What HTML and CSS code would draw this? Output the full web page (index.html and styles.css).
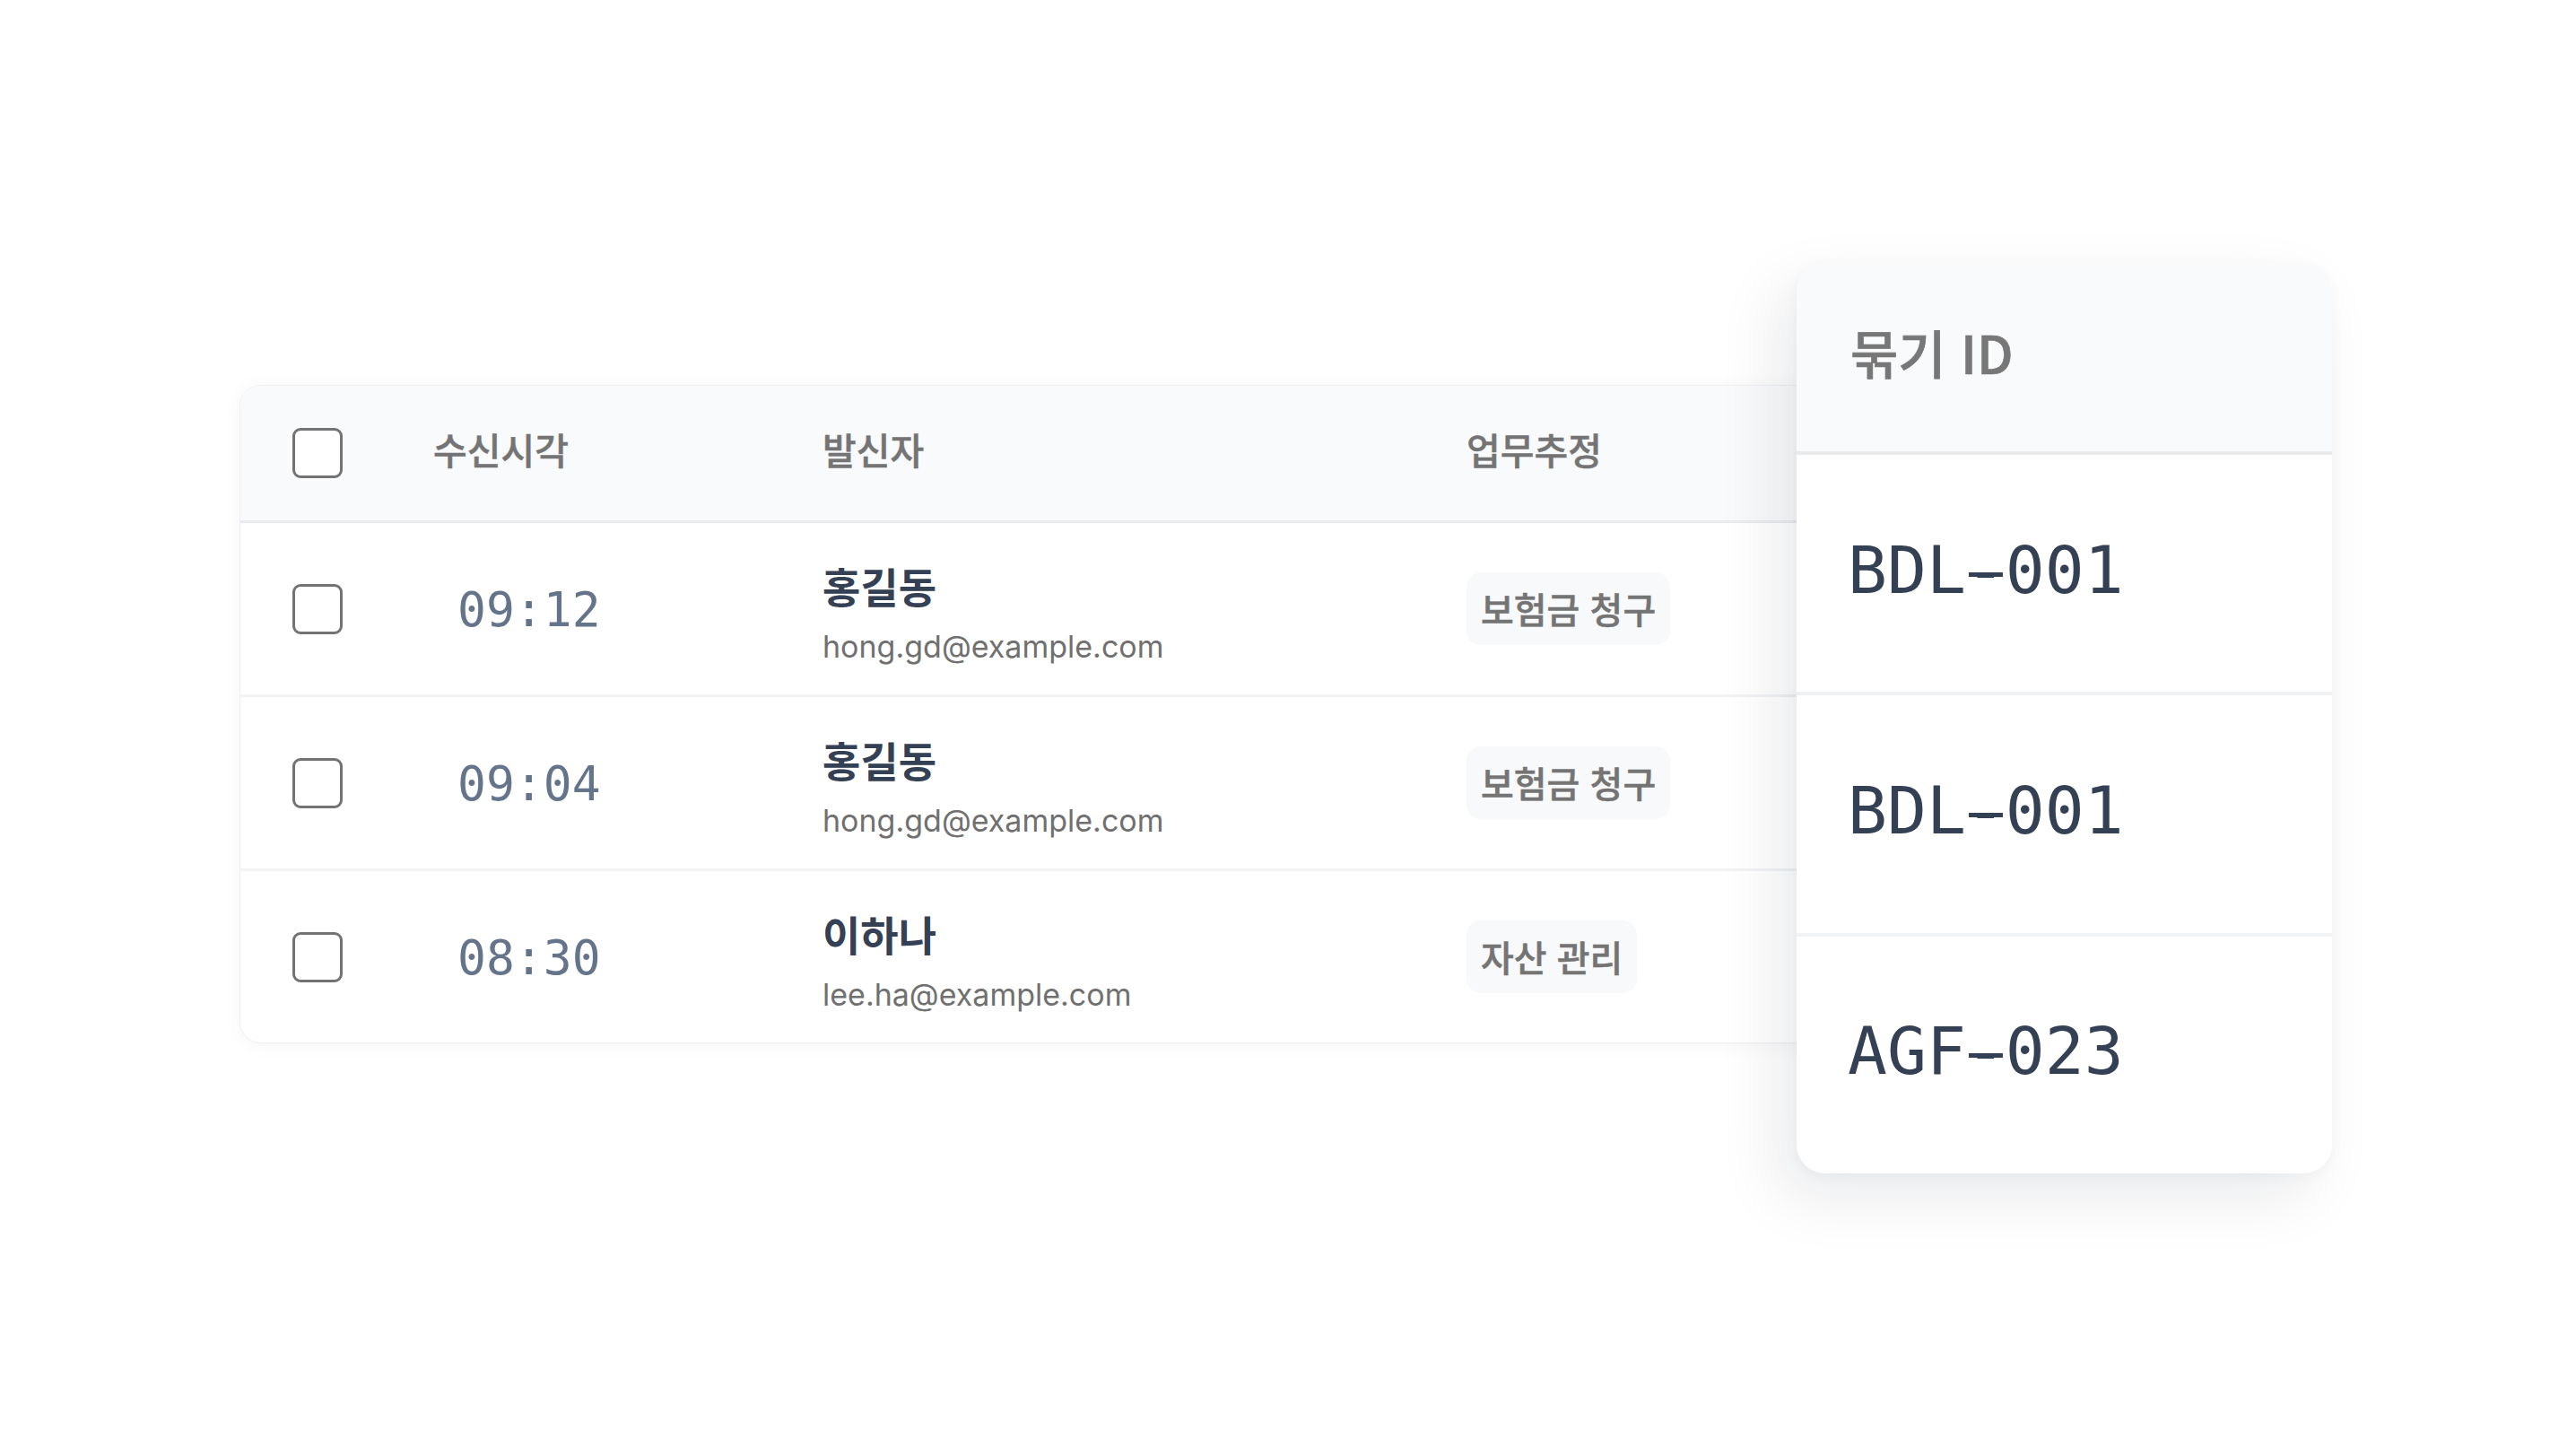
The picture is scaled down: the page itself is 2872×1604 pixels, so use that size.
FILE: index.html
```html
<!DOCTYPE html>
<html lang="ko">
<head>
<meta charset="utf-8">
<title>묶기 ID</title>
<link rel="stylesheet" href="styles.css">
</head>
<body>
<div class="stage">
  <div class="table-card">
    <div class="trow thead">
      <div class="cell c-check"><span class="checkbox"></span></div>
      <div class="cell c-time"><span class="th">수신시각</span></div>
      <div class="cell c-sender"><span class="th">발신자</span></div>
      <div class="cell c-task"><span class="th">업무추정</span></div>
    </div>
    <div class="trow">
      <div class="cell c-check"><span class="checkbox"></span></div>
      <div class="cell c-time"><span class="time">09:12</span></div>
      <div class="cell c-sender">
        <div class="sender">
          <span class="name">홍길동</span>
          <span class="email">hong.gd@example.com</span>
        </div>
      </div>
      <div class="cell c-task"><span class="badge">보험금 청구</span></div>
    </div>
    <div class="trow">
      <div class="cell c-check"><span class="checkbox"></span></div>
      <div class="cell c-time"><span class="time">09:04</span></div>
      <div class="cell c-sender">
        <div class="sender">
          <span class="name">홍길동</span>
          <span class="email">hong.gd@example.com</span>
        </div>
      </div>
      <div class="cell c-task"><span class="badge">보험금 청구</span></div>
    </div>
    <div class="trow">
      <div class="cell c-check"><span class="checkbox"></span></div>
      <div class="cell c-time"><span class="time">08:30</span></div>
      <div class="cell c-sender">
        <div class="sender">
          <span class="name">이하나</span>
          <span class="email">lee.ha@example.com</span>
        </div>
      </div>
      <div class="cell c-task"><span class="badge">자산 관리</span></div>
    </div>
  </div>

  <div class="bundle-card">
    <div class="bundle-head">묶기 ID</div>
    <div class="bundle-row">BDL<span class="dash">-</span>001</div>
    <div class="bundle-row">BDL<span class="dash">-</span>001</div>
    <div class="bundle-row">AGF<span class="dash">-</span>023</div>
  </div>
</div>
</body>
</html>
```

FILE: styles.css
```css
* {
  box-sizing: border-box;
}

html, body {
  margin: 0;
  padding: 0;
  background: #ffffff;
}

body {
  width: 2872px;
  height: 1604px;
  overflow: hidden;
  font-family: "Noto Sans CJK KR", "Noto Sans", sans-serif;
}

.stage {
  position: relative;
  width: 2872px;
  height: 1604px;
  padding: 429px 0 0 267px;
}

.table-card {
  width: 1813px;
  background: #ffffff;
  border: 1px solid #eef0f2;
  border-radius: 24px;
  overflow: hidden;
  box-shadow: 0 2px 22px rgba(15, 23, 42, 0.045);
}

.trow {
  display: grid;
  grid-template-columns: 215px 434px 718px 1fr;
  height: 194px;
  border-top: 3px solid #f1f3f5;
}

.trow.thead {
  height: 153px;
  border-top: 0;
  background: #f9fafb;
  border-bottom: 3px solid #e9ebee;
  padding-bottom: 8px;
}

.trow.thead .c-check {
  padding-top: 8px;
}

.trow.thead + .trow {
  border-top: 0;
  height: 191px;
}

.cell {
  display: flex;
  align-items: center;
}

.c-check {
  padding-left: 58px;
}

.checkbox {
  display: block;
  width: 56px;
  height: 56px;
  border: 3px solid #737373;
  border-radius: 9px;
  background: #ffffff;
}

.th {
  font-size: 41px;
  font-weight: 500;
  color: #747474;
  line-height: 1.4;
  -webkit-text-stroke: 0.5px #747474;
}

.time {
  font-family: "DejaVu Sans Mono", monospace;
  font-size: 53px;
  color: #64748b;
  padding-left: 27px;
  padding-top: 2px;
}

.sender {
  display: flex;
  flex-direction: column;
  gap: 16px;
  margin-top: 10px;
}

.name {
  font-size: 46px;
  font-weight: 700;
  line-height: 58px;
  color: #344054;
}

.email {
  font-family: "Inter", sans-serif;
  font-size: 34px;
  line-height: 48px;
  color: #707070;
}

.badge {
  display: inline-block;
  padding: 13px 16px;
  font-size: 40px;
  font-weight: 500;
  line-height: 55px;
  color: #747474;
  background: #f8f9fb;
  border-radius: 16px;
  white-space: nowrap;
  -webkit-text-stroke: 0.5px #747474;
}

.bundle-card {
  position: absolute;
  left: 2003px;
  top: 293px;
  width: 597px;
  height: 1015px;
  background: #ffffff;
  border-radius: 32px;
  overflow: hidden;
  display: flex;
  flex-direction: column;
  box-shadow: -22px 26px 70px rgba(15, 23, 42, 0.09), 0 4px 16px rgba(15, 23, 42, 0.03);
}

.bundle-head {
  height: 214px;
  flex: none;
  display: flex;
  align-items: center;
  padding-left: 60px;
  background: #f9fafb;
  border-bottom: 4px solid #e9eaec;
  font-size: 58px;
  font-weight: 500;
  color: #777777;
  padding-bottom: 12px;
  -webkit-text-stroke: 0.6px #777777;
}

.bundle-row {
  flex: 1;
  display: flex;
  align-items: center;
  padding-left: 57px;
  padding-bottom: 8px;
  font-family: "DejaVu Sans Mono", monospace;
  font-size: 73px;
  color: #344054;
  border-top: 4px solid #f1f2f4;
}

.bundle-head + .bundle-row {
  border-top: 0;
}

.dash {
  background-image: linear-gradient(#344054, #344054);
  background-repeat: no-repeat;
  background-size: 0.52em 0.075em;
  background-position: center 0.615em;
}
```
